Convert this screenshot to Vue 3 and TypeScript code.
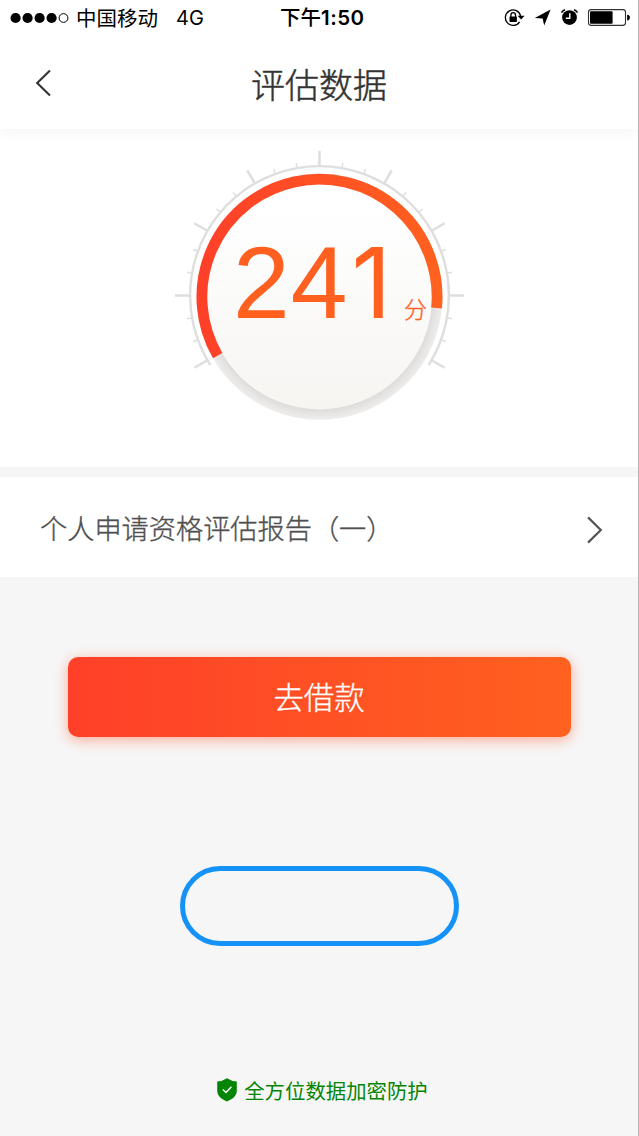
<script setup lang="ts">
const CX = 145
const CY = 144.5

interface Tick {
  angle: number
  major: boolean
}

const ticks: Tick[] = Array.from({ length: 25 }, (_, i) => {
  const angle = -120 + i * 10
  return { angle, major: angle % 30 === 0 }
})

// Angles are measured clockwise from twelve o'clock.
function arc(cx: number, cy: number, r: number, from: number, to: number): string {
  const point = (deg: number) => {
    const a = ((deg - 90) * Math.PI) / 180
    return `${(cx + r * Math.cos(a)).toFixed(2)} ${(cy + r * Math.sin(a)).toFixed(2)}`
  }
  return `M${point(from)} A${r} ${r} 0 ${to - from > 180 ? 1 : 0} 1 ${point(to)}`
}

const scalePath = arc(CX, CY, 129.4, -122.5, 122.5)
const progressPath = arc(CX, 145.8, 117.6, -120, 95.5)
const score = 241
const digits = String(score).split('')
</script>

<template>
  <div class="screen">
    <div class="top">
      <div class="status">
        <div class="carrier">
          <svg class="signal" width="60" height="12" viewBox="0 0 60 12">
            <circle v-for="n in 4" :key="n" :cx="5.6 + (n - 1) * 12" cy="6" r="5.1" fill="#000" />
            <circle cx="53.5" cy="6" r="4.4" fill="none" stroke="#000" stroke-width="1" />
          </svg>
          <span class="operator">中国移动</span>
          <span class="network">4G</span>
        </div>
        <div class="clock">下午<span class="time">1:50</span></div>
        <svg class="indicators" width="126" height="20" viewBox="0 0 126 20">
          <g fill="none" stroke="#000" stroke-width="1.3">
            <path d="M15.6 13.8 A7.7 7.7 0 1 1 16.6 8" />
            <path d="M6.9 9 V7 a2.3 2.3 0 0 1 4.6 0 V9" />
          </g>
          <rect x="5.5" y="8.5" width="7.4" height="5.4" rx="0.6" />
          <path d="M13.6 7.8 H20.6 L17.1 11.6 Z" />
          <path d="M46.6 1.6 L40.2 17.4 L38.6 10.6 L30.8 10 Z" />
          <circle cx="65.5" cy="9.6" r="7.4" />
          <path d="M65.8 5.2 V10.2 H61.8" fill="none" stroke="#fff" stroke-width="1.4" />
          <path d="M57.5 4.6 Q58.6 2.5 61 1.7 M70 1.7 Q72.4 2.5 73.5 4.6" fill="none" stroke="#000" stroke-width="1.5" />
          <rect x="84.5" y="1.6" width="37" height="15.8" rx="2.6" fill="none" stroke="#333" stroke-width="1.1" />
          <rect x="86" y="3.2" width="22.6" height="12.6" rx="1" />
          <path d="M123.1 6.8 a2.8 2.8 0 0 1 0 5.6 Z" />
        </svg>
      </div>
      <div class="nav">
        <svg class="back" width="20" height="30" viewBox="0 0 20 30">
          <path d="M16 2.6 L3.2 15 L16 27.4" fill="none" stroke="#333" stroke-width="2.1" />
        </svg>
        <h1>评估数据</h1>
      </div>
    </div>

    <div class="gauge">
      <svg class="dial" width="290" height="290" viewBox="-0.5 0 290 290">
        <defs>
          <linearGradient id="face" x1="0" y1="0" x2="0" y2="1">
            <stop offset="0.1" stop-color="#ffffff" />
            <stop offset="1" stop-color="#f6f5f2" />
          </linearGradient>
          <linearGradient id="progress" x1="0" y1="0" x2="1" y2="0">
            <stop offset="0" stop-color="#ff4029" />
            <stop offset="1" stop-color="#ff611f" />
          </linearGradient>
          <radialGradient id="rim" gradientUnits="userSpaceOnUse" cx="145" cy="145.8" r="123">
            <stop offset="0.914" stop-color="#dddcda" />
            <stop offset="0.96" stop-color="#e7e6e4" />
            <stop offset="1" stop-color="#eeedeb" />
          </radialGradient>
        </defs>
        <line
          v-for="t in ticks"
          :key="t.angle"
          :x1="CX"
          :x2="CX"
          :y1="CY - 130"
          :y2="CY - (t.major ? 144.5 : 134.5)"
          :transform="`rotate(${t.angle} ${CX} ${CY})`"
          stroke="#dedede"
          :stroke-width="t.major ? 2.5 : 1.5"
        />
        <path :d="scalePath" fill="none" stroke="#dedede" stroke-width="2.4" />
        <circle cx="145" cy="145.8" r="123" fill="url(#rim)" />
        <circle cx="145" cy="145.8" r="112.6" fill="url(#face)" />
        <path :d="progressPath" fill="none" stroke="url(#progress)" stroke-width="10.8" />
      </svg>
      <div class="score">
        <span class="value"><span v-for="(d, i) in digits" :key="i" class="digit" :class="{ one: d === '1' }">{{ d }}</span></span>
        <span class="unit">分</span>
      </div>
    </div>

    <div class="report">
      <span class="label">个人申请资格评估报告（一）</span>
      <svg class="next" width="20" height="30" viewBox="0 0 20 30">
        <path d="M3 2.4 L15.8 15 L3 27.6" fill="none" stroke="#555" stroke-width="2.2" />
      </svg>
    </div>

    <button class="borrow">去借款</button>
    <div class="pill"></div>

    <div class="secure">
      <svg width="20" height="24" viewBox="0 0 20 24">
        <path d="M10 0.2 Q14.5 3.2 19.8 3.4 V12.5 C19.8 18 15.5 21.3 10 23.4 C4.5 21.3 0.2 18 0.2 12.5 V3.4 Q5.5 3.2 10 0.2 Z" fill="#058505" />
        <path d="M5.8 11.6 L9 14.6 L14.4 8.8" fill="none" stroke="#fff" stroke-width="1.4" />
      </svg>
      <span>全方位数据加密防护</span>
    </div>
  </div>
</template>

<style>
body {
  margin: 0;
  background: #f6f6f6;
}
</style>

<style scoped>
.screen {
  box-sizing: border-box;
  width: 639px;
  height: 1136px;
  display: flex;
  flex-direction: column;
  align-items: center;
  overflow: hidden;
  background: #f6f6f6;
  border-right: 1px solid #b4b4b4;
  font-family: "Liberation Sans", "Noto Sans CJK SC", sans-serif;
}

.top {
  width: 100%;
  height: 129px;
  flex: none;
  background: #fff;
  box-shadow: 0 2px 12px rgba(0, 0, 0, 0.05);
  z-index: 1;
}

.status {
  height: 36px;
  display: grid;
  grid-template-columns: 270px auto 1fr;
  grid-template-rows: 35px;
  align-items: center;
  padding: 0 8px 0 10px;
  color: #000;
  font-size: 20.5px;
}

.carrier {
  display: flex;
  align-items: center;
}

.operator {
  margin-left: 6px;
  line-height: 35px;
  padding-top: 1px;
}

.network {
  margin-left: 18px;
  font-family: Inter, "Liberation Sans", sans-serif;
  font-size: 20px;
}

.clock {
  font-family: "Noto Sans CJK SC", sans-serif;
  font-weight: 500;
  line-height: 34px;
  font-size: 20.5px;
  padding-bottom: 3px;
}

.time {
  font-family: Inter, sans-serif;
  font-weight: 600;
  font-size: 20.5px;
  letter-spacing: 0.5px;
  line-height: 1;
}

.indicators {
  justify-self: end;
}

.nav {
  display: grid;
  grid-template-columns: 32px 1fr 32px;
  align-items: center;
  height: 93px;
}

.back {
  align-self: start;
  margin: 32px 0 0 34px;
}

h1 {
  margin: 6px 0 0;
  text-align: center;
  font-weight: 300;
  -webkit-text-stroke: 0.5px #333;
  font-size: 34px;
  line-height: 50px;
  color: #333;
}

.gauge {
  width: 100%;
  height: 338px;
  flex: none;
  display: grid;
  justify-items: center;
  align-items: start;
  background: #fff;
}

.dial {
  grid-area: 1 / 1;
  margin-top: 22px;
}

.score {
  grid-area: 1 / 1;
  justify-self: start;
  display: flex;
  align-items: baseline;
  margin: 99px 0 0 233px;
  color: #ff5f1f;
}

.value {
  width: 171px;
  white-space: nowrap;
  font-size: 102px;
  line-height: 110px;
}

.digit {
  letter-spacing: 1px;
}

.one {
  margin-left: 3px;
  font-family: Inter, sans-serif;
  font-size: 98px;
  line-height: 1;
}

.unit {
  font-size: 23px;
  line-height: 30px;
  font-weight: 300;
  -webkit-text-stroke: 0.4px #ff5f1f;
}

.report {
  box-sizing: border-box;
  width: 100%;
  height: 100px;
  flex: none;
  margin-top: 10px;
  padding: 0 33px 0 40px;
  display: flex;
  align-items: center;
  justify-content: space-between;
  background: #fff;
  color: #505050;
  font-size: 27.2px;
  font-weight: 300;
  -webkit-text-stroke: 0.35px #505050;
}

.next {
  margin-top: 6px;
}

.borrow {
  width: 503px;
  height: 80px;
  flex: none;
  margin: 80px 0 0;
  padding: 0 0 3px;
  border: 0;
  border-radius: 10px;
  background: linear-gradient(90deg, #ff4029, #ff611f);
  box-shadow: 0 3px 14px rgba(255, 80, 36, 0.45);
  color: #fff;
  font-family: inherit;
  font-size: 30.4px;
  font-weight: 300;
  -webkit-text-stroke: 0.3px #fff;
}

.pill {
  box-sizing: border-box;
  width: 279px;
  height: 80px;
  flex: none;
  margin-top: 129px;
  border: 5px solid #1592f8;
  border-radius: 40px;
}

.secure {
  display: flex;
  align-items: center;
  gap: 7px;
  margin-top: 129px;
  margin-left: 7px;
  color: #058505;
  font-size: 20.4px;
}
</style>
